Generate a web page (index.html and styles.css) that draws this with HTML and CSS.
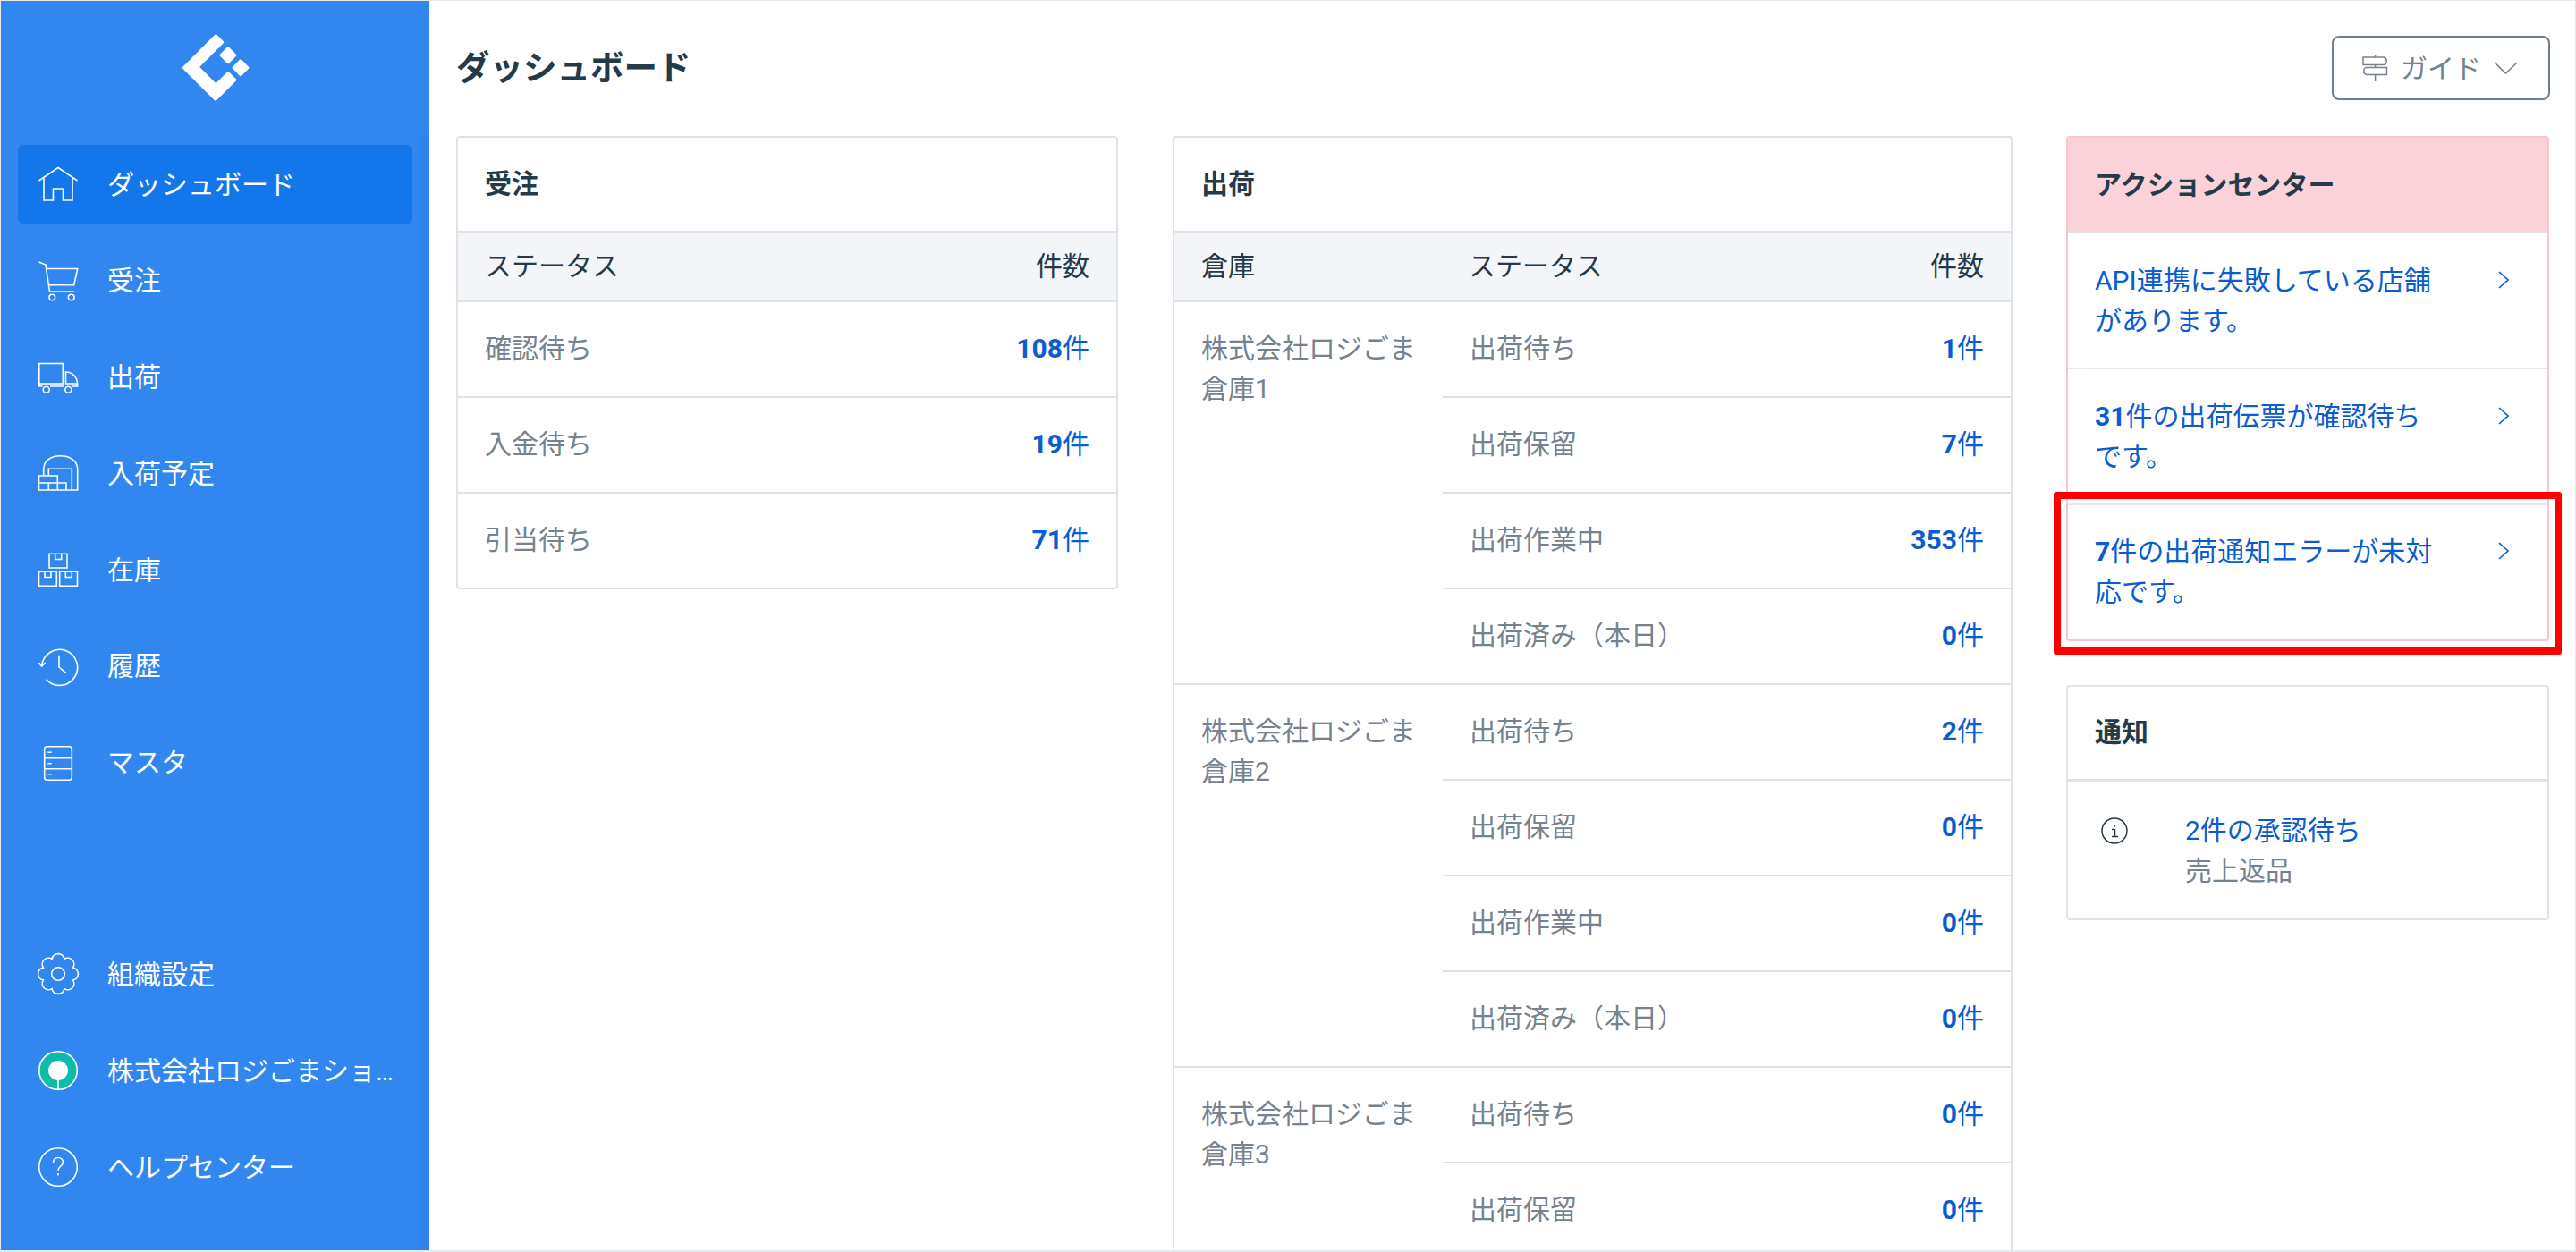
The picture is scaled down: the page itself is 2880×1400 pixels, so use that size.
FILE: index.html
```html
<!DOCTYPE html>
<html lang="ja">
<head>
    <meta charset="UTF-8">
    <meta name="viewport" content="width=device-width, initial-scale=1.0">
    <title>ダッシュボード</title>
    <link rel="stylesheet" href="styles.css">
</head>
<body>
<div class="frame">
    <aside class="sidebar">
        <div class="logo">
            <svg class="logo-mark" viewBox="0 0 76 76">
                <path d="M38.3 1.8 45.7 9.2 18.05 36.85 38.4 57.2 52 43.6 59.8 51.4 37.95 73.25 2.4 37.7Z"/>
                <path d="M52 15.8 59.9 23.7 52 31.6 44.1 23.7Z"/>
                <path d="M66 29.8 73.9 37.7 66 45.6 58.1 37.7Z"/>
            </svg>
        </div>
        <nav class="nav">
            <div class="nav-list">
                <a class="nav-item active">
                    <svg class="nav-icon" viewBox="0 0 44 44"><path d="M.5 18 22 3.5 43.5 18M6 14.5V40H16.5V27H27.5V40H38V14.5"/></svg>
                    <span class="nav-text">ダッシュボード</span>
                </a>
                <a class="nav-item">
                    <svg class="nav-icon" viewBox="0 0 44 44"><path d="M.5 1 8 4 12.5 34H39.7M9.5 8.5H43.7L39.7 26.7H12"/><circle cx="15.3" cy="40.5" r="3.3"/><circle cx="36.7" cy="40.5" r="3.3"/></svg>
                    <span class="nav-text">受注</span>
                </a>
                <a class="nav-item">
                    <svg class="nav-icon" viewBox="0 0 44 44"><rect x=".8" y="6.5" width="26.5" height="22.5"/><path d="M30.5 16C38 16 43.5 22 43.5 29H30.5ZM.8 29V32H4.5M13 32H28.5M38 32H43.5V29"/><circle cx="8.7" cy="35.7" r="3.5"/><circle cx="33.3" cy="35.7" r="3.5"/></svg>
                    <span class="nav-text">出荷</span>
                </a>
                <a class="nav-item">
                    <svg class="nav-icon" viewBox="0 0 44 44"><path d="M5.7 25V18C5.7 9 13 2.7 24.5 2.7S43.7 9 43.7 18V41H.5V25H21.3V41M11.3 25V17.3H37.3V41M.5 33H31V41M11.3 33V41"/></svg>
                    <span class="nav-text">入荷予定</span>
                </a>
                <a class="nav-item">
                    <svg class="nav-icon" viewBox="0 0 44 44"><path d="M12 4.3H32V20H12ZM18.7 4.3V10.5H25.7V4.3M.5 24.3H20.3V40.3H.5ZM7 24.3V30.5H14V24.3M23.7 24.3H43.5V40.3H23.7ZM30.3 24.3V30.5H37.3V24.3"/></svg>
                    <span class="nav-text">在庫</span>
                </a>
                <a class="nav-item">
                    <svg class="nav-icon" viewBox="0 0 44 44"><path d="M3.7 21.5A20 20 0 1 1 8.5 36.5M.3 18 3.7 22 7.7 18M23 9.7V23L30.7 29.7"/></svg>
                    <span class="nav-text">履歴</span>
                </a>
                <a class="nav-item">
                    <svg class="nav-icon" viewBox="0 0 44 44"><rect x="6.7" y="3.7" width="30.6" height="37.6" rx="3"/><path d="M6.7 16.7H37.3M6.7 28.7H37.3M10.3 10.3H14.7M10.3 22.7H14.7M10.3 34.7H14.7"/></svg>
                    <span class="nav-text">マスタ</span>
                </a>
            </div>
            <div class="nav-list nav-bottom">
                <a class="nav-item">
                    <svg class="nav-icon" viewBox="0 0 44 44"><path d="M38.6 15.1A7 7 0 0 1 38.6 28.9 7 7 0 0 1 28.9 38.6 7 7 0 0 1 15.1 38.6 7 7 0 0 1 5.4 28.9 7 7 0 0 1 5.4 15.1 7 7 0 0 1 15.1 5.4 7 7 0 0 1 28.9 5.4 7 7 0 0 1 38.6 15.1Z"/><circle cx="22" cy="22" r="7.3"/></svg>
                    <span class="nav-text">組織設定</span>
                </a>
                <a class="nav-item">
                    <svg class="nav-icon" viewBox="0 0 44 44"><circle class="shop-disc" cx="22" cy="22" r="21.3"/><circle class="shop-dot" cx="22" cy="22" r="11"/><path d="M22 28V43"/></svg>
                    <span class="nav-text">株式会社ロジごまショップ</span>
                </a>
                <a class="nav-item">
                    <svg class="nav-icon" viewBox="0 0 44 44"><circle cx="22" cy="22" r="21.3"/><path d="M16.5 17C16.5 13.5 19 11.5 22 11.5S27.5 13.5 27.5 17C27.5 21 22 21 22 26M22 29V31.5"/></svg>
                    <span class="nav-text">ヘルプセンター</span>
                </a>
            </div>
        </nav>
    </aside>

    <main class="main">
        <header class="page-head">
            <h1 class="page-title">ダッシュボード</h1>
            <button class="guide-btn">
                <svg class="guide-icon" viewBox="0 0 29 29"><path d="M14.6 0V2M14.6 10.5V13.5M14.6 21.5V29M1 2H23.5C28.5 2 28.5 10.5 23.5 10.5H1ZM27.5 13.5V21.5H5.5C.5 21.5 .5 13.5 5.5 13.5Z"/></svg>
                <span>ガイド</span>
                <svg class="guide-caret" viewBox="0 0 27 14"><path d="M1 1 13.5 13 26 1"/></svg>
            </button>
        </header>

        <div class="board">
            <section class="card orders">
                <div class="card-title">受注</div>
                <div class="table-head">
                    <span>ステータス</span>
                    <span>件数</span>
                </div>
                <div class="row"><span class="label">確認待ち</span><span class="count"><b>108</b>件</span></div>
                <div class="row"><span class="label">入金待ち</span><span class="count"><b>19</b>件</span></div>
                <div class="row"><span class="label">引当待ち</span><span class="count"><b>71</b>件</span></div>
            </section>

            <section class="card shipping">
                <div class="card-title">出荷</div>
                <div class="table-head">
                    <span class="col-warehouse">倉庫</span>
                    <span class="col-status">ステータス</span>
                    <span>件数</span>
                </div>
                <div class="group">
                    <div class="warehouse">株式会社ロジごま倉庫1</div>
                    <div class="group-rows">
                        <div class="row"><span class="label">出荷待ち</span><span class="count"><b>1</b>件</span></div>
                        <div class="row"><span class="label">出荷保留</span><span class="count"><b>7</b>件</span></div>
                        <div class="row"><span class="label">出荷作業中</span><span class="count"><b>353</b>件</span></div>
                        <div class="row"><span class="label">出荷済み（本日）</span><span class="count"><b>0</b>件</span></div>
                    </div>
                </div>
                <div class="group">
                    <div class="warehouse">株式会社ロジごま倉庫2</div>
                    <div class="group-rows">
                        <div class="row"><span class="label">出荷待ち</span><span class="count"><b>2</b>件</span></div>
                        <div class="row"><span class="label">出荷保留</span><span class="count"><b>0</b>件</span></div>
                        <div class="row"><span class="label">出荷作業中</span><span class="count"><b>0</b>件</span></div>
                        <div class="row"><span class="label">出荷済み（本日）</span><span class="count"><b>0</b>件</span></div>
                    </div>
                </div>
                <div class="group">
                    <div class="warehouse">株式会社ロジごま倉庫3</div>
                    <div class="group-rows">
                        <div class="row"><span class="label">出荷待ち</span><span class="count"><b>0</b>件</span></div>
                        <div class="row"><span class="label">出荷保留</span><span class="count"><b>0</b>件</span></div>
                    </div>
                </div>
            </section>

            <div class="side">
                <section class="card action-card">
                    <div class="card-title action-title">アクションセンター</div>
                    <a class="action-row">
                        <span class="action-text">API連携に失敗している店舗があります。</span>
                        <svg class="chevron" viewBox="0 0 12 20"><path d="M1 1 11 10 1 19"/></svg>
                    </a>
                    <a class="action-row">
                        <span class="action-text"><b>31</b>件の出荷伝票が確認待ちです。</span>
                        <svg class="chevron" viewBox="0 0 12 20"><path d="M1 1 11 10 1 19"/></svg>
                    </a>
                    <a class="action-row">
                        <span class="action-text"><b>7</b>件の出荷通知エラーが未対応です。</span>
                        <svg class="chevron" viewBox="0 0 12 20"><path d="M1 1 11 10 1 19"/></svg>
                        <div class="highlight"></div>
                    </a>
                </section>

                <section class="card notice-card">
                    <div class="card-title">通知</div>
                    <div class="notice">
                        <svg class="info-icon" viewBox="0 0 30 30"><circle cx="15" cy="15" r="14"/><path d="M12 13.5H15.5V21M12 21.5H19M15.2 8.5V10.5"/></svg>
                        <div>
                            <a class="notice-link">2件の承認待ち</a>
                            <div class="label">売上返品</div>
                        </div>
                    </div>
                </section>
            </div>
        </div>
    </main>
</div>
</body>
</html>
```

FILE: styles.css
```css
* {
    margin: 0;
    padding: 0;
    box-sizing: border-box;
}
body {
    font-family: Roboto, "Noto Sans CJK JP", sans-serif;
    font-size: 30px;
    line-height: 45px;
    color: #253a48;
    background: white;
}
.frame {
    display: flex;
    height: 100vh;
    overflow: hidden;
    border: 1px solid #e6e9ec;
    border-bottom-width: 2px;
}

/* sidebar */
.sidebar {
    width: 479px;
    flex-shrink: 0;
    display: flex;
    flex-direction: column;
    background: #3187ef;
    color: white;
}
.logo {
    height: 151px;
    padding-bottom: 1px;
    display: flex;
    justify-content: center;
    align-items: center;
    flex-shrink: 0;
}
.logo-mark {
    width: 76px;
    height: 76px;
    fill: white;
    stroke: white;
    stroke-width: 3;
    stroke-linejoin: round;
}
.nav {
    flex: 1;
    display: flex;
    flex-direction: column;
    justify-content: space-between;
    padding: 10px 0 49px 19px;
    background: linear-gradient(to left, rgba(0, 40, 110, 0.07), transparent 15px);
}
.nav-list {
    display: flex;
    flex-direction: column;
    gap: 19.8px;
}
.nav-item {
    height: 88px;
    width: 441px;
    display: flex;
    align-items: center;
    gap: 33px;
    padding: 0 20px 0 23px;
    border-radius: 6px;
}
.nav-item.active {
    background: #1476eb;
}
.nav-icon {
    width: 44px;
    height: 44px;
    flex-shrink: 0;
    overflow: visible;
    fill: none;
    stroke: white;
    stroke-width: 1.6;
}
.nav-text {
    min-width: 0;
    white-space: nowrap;
    overflow: hidden;
    text-overflow: ellipsis;
}
.shop-disc {
    fill: #0dbbaa;
}
.shop-dot {
    fill: white;
    stroke: none;
}

/* main */
.main {
    flex: 1;
    min-width: 0;
    padding: 39px 28px 0 30px;
}
.page-head {
    height: 72px;
    margin-bottom: 40px;
    display: flex;
    justify-content: space-between;
    align-items: center;
}
.page-title {
    font-size: 37.5px;
    font-weight: 700;
}
.guide-btn {
    width: 244px;
    height: 72px;
    display: flex;
    justify-content: center;
    align-items: center;
    gap: 14px;
    padding-right: 2px;
    font: inherit;
    color: #76838f;
    background: white;
    border: 2px solid #6f7f8c;
    border-radius: 8px;
}
.guide-icon {
    width: 29px;
    height: 29px;
    fill: none;
    stroke: #76838f;
    stroke-width: 1.5;
}
.guide-caret {
    width: 27px;
    height: 14px;
    fill: none;
    stroke: #76838f;
    stroke-width: 1.6;
}
.board {
    display: flex;
    align-items: flex-start;
}
.card {
    border: 2px solid #dde3e8;
    border-radius: 4px;
    background: white;
}
.orders {
    width: 740px;
}
.shipping {
    width: 939px;
    margin-left: 61px;
}
.side {
    width: 540px;
    margin-left: 60px;
}
.card-title {
    height: 106px;
    display: flex;
    align-items: center;
    padding: 0 30px 2px;
    font-weight: 700;
    border-bottom: 2px solid #dde3e8;
}
.table-head {
    height: 78px;
    display: flex;
    justify-content: space-between;
    align-items: center;
    padding: 0 30px 2px;
    background: #f4f5f9;
    border-bottom: 2px solid #dde3e8;
}
.col-warehouse {
    width: 299px;
    flex-shrink: 0;
}
.col-status {
    flex: 1;
}
.row {
    height: 107px;
    display: flex;
    justify-content: space-between;
    align-items: center;
    padding: 0 30px 3px;
    border-bottom: 2px solid #dde3e8;
}
.row:last-child {
    height: 105px;
    border-bottom: 0;
}
.label {
    color: #76838f;
}
.count {
    color: #0a5cd0;
}
.count b {
    font-weight: 700;
}
.group {
    display: flex;
    border-bottom: 2px solid #dde3e8;
}
.warehouse {
    width: 300px;
    flex-shrink: 0;
    padding: 29px 30px 0;
    color: #76838f;
}
.group-rows {
    flex: 1;
}

/* action center */
.action-card {
    border-color: #fcc5ce;
}
.action-title {
    height: 107px;
    padding-bottom: 0;
    background: #fcd2da;
    border-bottom-color: #dfe3e6;
}
.action-row {
    position: relative;
    display: flex;
    justify-content: space-between;
    height: 152px;
    padding: 30px 43px 0 30px;
    color: #0a5cd0;
    border-bottom: 2px solid #e4e8ec;
}
.action-row:last-child {
    height: 150px;
    padding-top: 29px;
    border-bottom: 0;
}
.action-text {
    width: 386px;
}
.chevron {
    width: 12px;
    height: 20px;
    margin-top: 12px;
    fill: none;
    stroke: #0a5cd0;
    stroke-width: 1.6;
}
.highlight {
    position: absolute;
    top: -15px;
    bottom: -17px;
    left: -16px;
    right: -16px;
    border: 8px solid #ff0000;
    border-radius: 3px;
}
.notice-card {
    margin-top: 49px;
}
.notice-card .card-title {
    border-bottom-width: 3px;
}
.notice {
    display: flex;
    gap: 64px;
    padding: 32px 30px 31px 37px;
}
.info-icon {
    width: 30px;
    height: 30px;
    margin-top: 8px;
    flex-shrink: 0;
    fill: none;
    stroke: #253a48;
    stroke-width: 1.5;
}
.notice-link {
    display: block;
    color: #0a5cd0;
}
```
